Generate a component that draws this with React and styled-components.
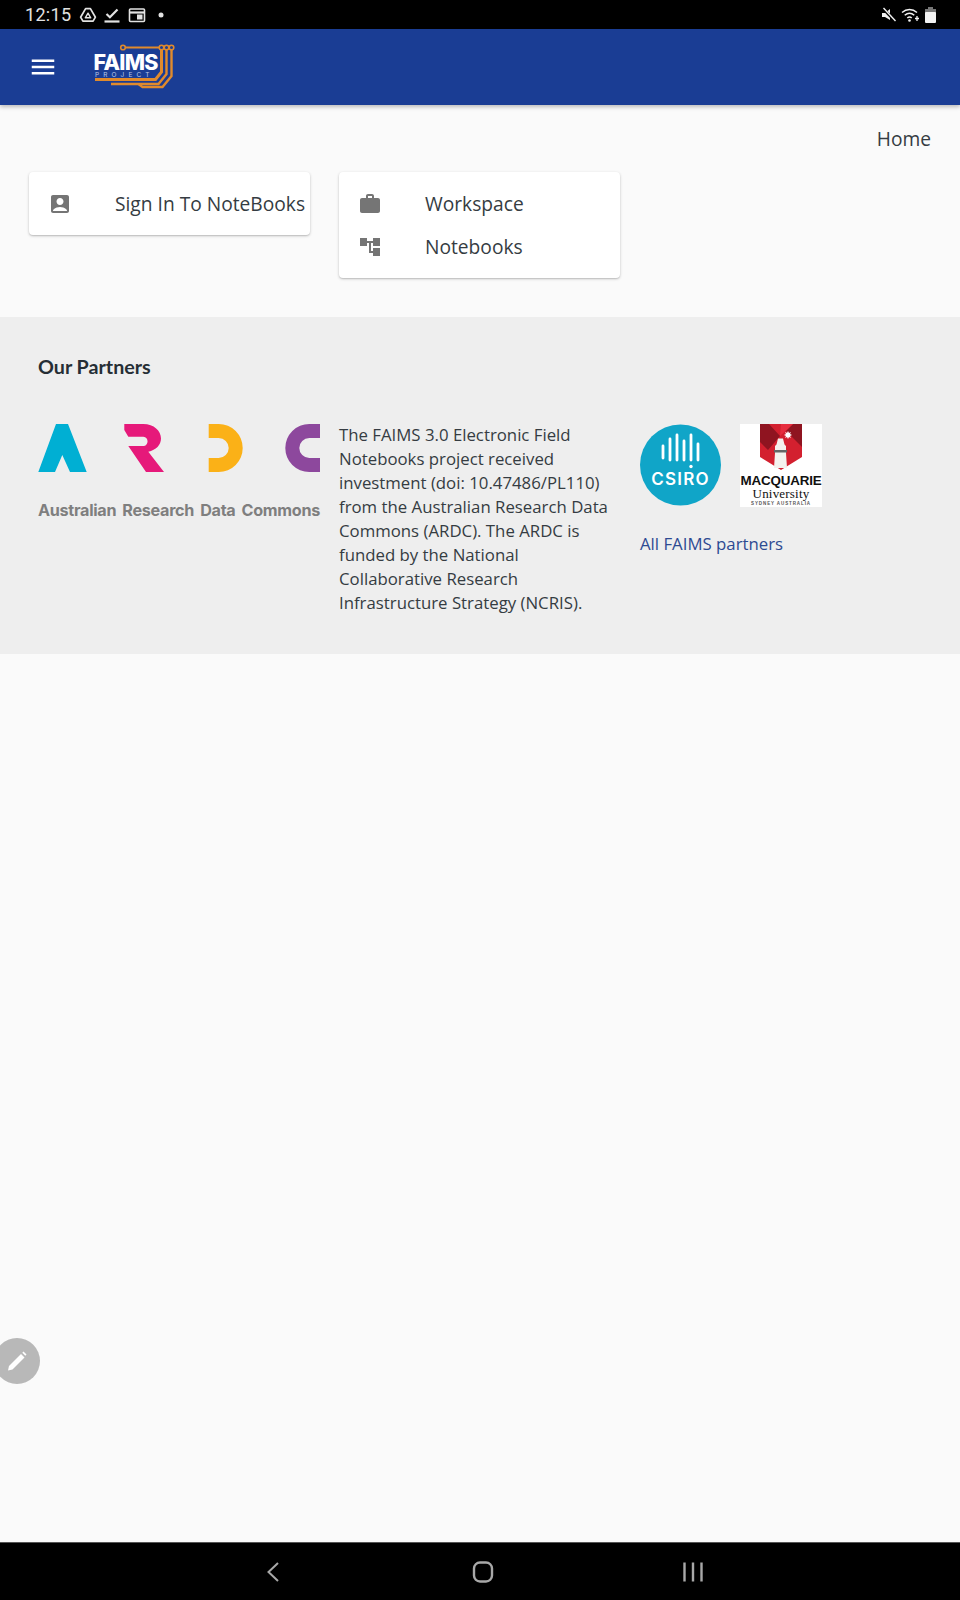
import React from 'react';
import styled, { createGlobalStyle } from 'styled-components';
import { MdMenu, MdAccountBox, MdWork, MdAccountTree } from 'react-icons/md';

const GlobalStyle = createGlobalStyle`
  html, body { margin: 0; padding: 0; background: #fafafa; }
  body { font-family: "Open Sans", sans-serif; color: #353c42; }
`;

const Page = styled.div`
  position: relative;
  display: flex;
  flex-direction: column;
  width: 960px;
  height: 1600px;
  overflow: hidden;
`;

const StatusBar = styled.div`
  display: flex;
  align-items: center;
  justify-content: space-between;
  height: 29px;
  padding: 0 24px 0 25px;
  background: #000;
  color: #e2e2e2;
`;

const StatusGroup = styled.div`
  display: flex;
  align-items: center;
  gap: ${({ $gap }) => $gap || 8}px;
`;

const Clock = styled.span`
  font: 400 18px/1 Roboto, sans-serif;
  letter-spacing: 0.3px;
  margin-right: 1px;
`;

const AppBar = styled.header`
  display: flex;
  align-items: center;
  height: 76px;
  padding-left: 28px;
  gap: 35px;
  background: #1a3d94;
  color: #fff;
  box-shadow: 0 2px 4px rgba(0, 0, 0, 0.25);
  position: relative;
  z-index: 1;
`;

const MenuIcon = styled(MdMenu)`
  width: 30px;
  height: 30px;
`;

const Crumbs = styled.div`
  padding: 20px 29px 0 0;
  text-align: right;
  font-size: 19.2px;
  line-height: 27px;
`;

const Cards = styled.div`
  display: flex;
  align-items: flex-start;
  gap: 29px;
  padding: 20px 29px 39px;
`;

const Card = styled.nav`
  display: flex;
  flex-direction: column;
  width: 281px;
  padding: 10px 0;
  box-sizing: border-box;
  background: #fff;
  border-radius: 4px;
  box-shadow: 0 1px 3px rgba(0, 0, 0, 0.22), 0 1px 1px rgba(0, 0, 0, 0.08);
`;

const Row = styled.div`
  display: flex;
  align-items: center;
  height: 43px;
  padding-left: 19px;
  gap: 43px;
  font-size: 19.2px;
  white-space: nowrap;
  svg { width: 24px; height: 24px; color: #757575; flex: none; }
`;

const Partners = styled.section`
  display: grid;
  grid-template-columns: 301px 301px 1fr;
  align-content: start;
  height: 337px;
  padding: 37px 0 0 38px;
  box-sizing: border-box;
  background: #eee;
`;

const Heading = styled.h2`
  grid-column: 1 / -1;
  margin: 0 0 45px;
  font: 700 19.7px/25px Lato, sans-serif;
  color: #262e35;
`;

const ArdcColumn = styled.div`
  width: 282px;
`;

const ArdcMark = styled.svg`
  display: block;
  width: 282px;
  height: 48px;
`;

const ArdcName = styled.div`
  display: flex;
  justify-content: space-between;
  margin-top: 26px;
  font: 700 16.2px/24px Inter, sans-serif;
  letter-spacing: -0.3px;
  color: #7f7f7f;
`;

const Blurb = styled.p`
  width: 275px;
  margin: -1px 0 0;
  font-size: 16.8px;
  line-height: 24px;
`;

const LogoRow = styled.div`
  display: flex;
  align-items: flex-start;
  gap: 19px;
`;

const CsiroLogo = styled.svg`
  display: block;
  width: 81px;
  height: 82px;
`;

const CsiroText = styled.text`
  font: 600 17px Inter, sans-serif;
  letter-spacing: 1.2px;
  fill: #fff;
`;

const MqBox = styled.div`
  display: flex;
  flex-direction: column;
  align-items: center;
  width: 82px;
  height: 83px;
  background: #fff;
  color: #111;
  overflow: hidden;
`;

const MqShield = styled.svg`
  display: block;
  width: 42px;
  height: 49px;
  flex: none;
  margin-bottom: 1px;
`;

const MqName = styled.span`
  font: 700 13.4px/14px "Liberation Sans", sans-serif;
  letter-spacing: -0.2px;
  white-space: nowrap;
`;

const MqUni = styled.span`
  font: 400 13px/12px "Liberation Serif", serif;
  letter-spacing: 0.2px;
`;

const MqPlace = styled.span`
  font: 700 4.5px/8px "Liberation Sans", sans-serif;
  letter-spacing: 0.9px;
  white-space: nowrap;
  color: #555;
`;

const PartnerLink = styled.a`
  display: block;
  margin-top: 25px;
  font-size: 16.8px;
  line-height: 24px;
  color: #2d4a92;
  text-decoration: none;
`;

const Filler = styled.div`
  flex: 1;
`;

const EditButton = styled.button`
  position: absolute;
  left: -6px;
  top: 1338px;
  display: flex;
  align-items: center;
  justify-content: center;
  width: 46px;
  height: 46px;
  padding: 0;
  border: 0;
  border-radius: 50%;
  background: #b8b8b8;
  color: #fff;
`;

const NavBar = styled.footer`
  display: flex;
  align-items: center;
  justify-content: center;
  gap: 186px;
  height: 58px;
  padding-left: 5px;
  background: #000;
  border-top: 1px solid #555;
  box-sizing: border-box;
  color: #a8a8a8;
`;

function DriveBadge() {
  return (
    <svg width="18" height="18" viewBox="0 0 18 18" fill="none" stroke="currentColor" strokeWidth="1.7" strokeLinejoin="round">
      <path d="M6.6 2.6h4.8l5 8.6-2.3 4H3.9l-2.3-4z" />
      <path d="M9 7.2l2.7 4.6H6.3z" strokeWidth="1.4" />
    </svg>
  );
}

function CheckBar() {
  return (
    <svg width="18" height="18" viewBox="0 0 18 18" fill="none" stroke="currentColor" strokeWidth="2.2">
      <path d="M3.5 8l3.4 3.2L14.5 3.500" />
      <path d="M1.500 15.500h15" />
    </svg>
  );
}

function CalendarBadge() {
  return (
    <svg width="18" height="18" viewBox="0 0 18 18" fill="none" stroke="currentColor" strokeWidth="1.6">
      <rect x="1.5" y="3" width="15" height="12.5" rx="1" />
      <path d="M1.5 6.5h15" strokeWidth="2.2" />
      <rect x="9" y="8.5" width="5.5" height="5" fill="currentColor" stroke="none" />
    </svg>
  );
}

function MuteIcon() {
  return (
    <svg width="16" height="16" viewBox="0 0 16 16">
      <path d="M1 6h3l5-4v11L4 10H1z" fill="#f2f2f2" />
      <path d="M2 1.5L14.5 14.5" stroke="#000" strokeWidth="3" />
      <path d="M2.5 1l12 13" stroke="#f2f2f2" strokeWidth="1.4" />
    </svg>
  );
}

function WifiIcon() {
  return (
    <svg width="20" height="16" viewBox="0 0 20 16" fill="none" stroke="#f2f2f2" strokeWidth="1.5">
      <path d="M1 5.5c4.5-4 10.5-4 15 0" />
      <path d="M3.7 8.3c3-2.6 6.6-2.6 9.6 0" />
      <path d="M6.3 11c1.5-1.3 3-1.3 4.4 0" />
      <circle cx="8.5" cy="13.5" r="1.3" fill="#f2f2f2" stroke="none" />
      <path d="M16 9v5M14 11.500h4" strokeWidth="1.300" />
    </svg>
  );
}

function BatteryIcon() {
  return (
    <svg width="11" height="16" viewBox="0 0 11 16">
      <rect x="3" y="0" width="5" height="3" fill="#777" />
      <rect x="0" y="2" width="11" height="4" fill="#777" />
      <rect x="0" y="5" width="11" height="11" rx="1" fill="#f2f2f2" />
    </svg>
  );
}

function PencilIcon() {
  return (
    <svg width="24" height="24" viewBox="0 0 24 24">
      <path d="M3 21.500l1-4.500L16 5l3.500 3.500-12 12z" fill="#fff" />
      <path d="M17.300 3.700l1.200-1.200 3 3-1.200 1.200z" fill="#fff" />
    </svg>
  );
}

function FaimsLogo() {
  return (
    <svg width="82" height="48" viewBox="92 43 82 48" fill="none" style={{ display: 'block' }}>
      <g stroke="#e08a2c" strokeWidth="2.400">
        <path d="M123 47.500h49" strokeWidth="2" />
        <path d="M160.500 48v24l-6 7.500H94" strokeWidth="3" />
        <path d="M165.500 48v26l-8 10H110" />
        <path d="M170.500 48v28l-9 11h-20l-4-3" />
      </g>
      <g fill="#1a3d94" stroke="#e08a2c" strokeWidth="1.600">
        <circle cx="122" cy="47.500" r="2.300" />
        <circle cx="160.500" cy="47.500" r="2.300" />
        <circle cx="165.500" cy="47.500" r="2.300" />
        <circle cx="170.500" cy="47.500" r="2.300" />
      </g>
      <text x="92.500" y="70" fontFamily="Inter, sans-serif" fontWeight="800" fontSize="21.500" letterSpacing="-0.700" fill="#fff">FAIMS</text>
      <text x="94" y="77" fontFamily="Inter, sans-serif" fontSize="6.500" letterSpacing="4.100" fill="#b9c7e6">PROJECT</text>
    </svg>
  );
}

function ArdcLogo() {
  return (
    <ArdcMark viewBox="38 424 282 48">
      <path fill="#00afd3" d="M38.300 472L56 424h12l18.700 48H70l-7.700-17-7.300 17z" />
      <path fill="#e6197a" d="M124.300 424H143.300C154 424 161 431 161 438.500C161 445 156 450 148.300 451.700L164 472H146L128.300 446H143.300C149 446 149 436.700 143.300 436.700H128.300L124.300 430Z" />
      <path fill="#fbb117" d="M208.700 424h10a24 24 0 0 1 0 48h-10v-14h10a10 10 0 0 0 0-20h-10z" />
      <path fill="#8d489d" d="M320 424h-10.700a24 24 0 0 0 0 48H320v-14h-10.700a10 10 0 0 1 0-20H320z" />
    </ArdcMark>
  );
}

function CsiroMark() {
  return (
    <CsiroLogo viewBox="0 0 81 82">
      <circle cx="40.500" cy="41" r="40.500" fill="#10a5c8" />
      <g stroke="#fff" strokeWidth="2.800" strokeLinecap="round">
        <path d="M23 22v12" />
        <path d="M30 15v21" />
        <path d="M37 11v25" />
        <path d="M44 17v19" />
        <path d="M51 11v25" />
        <path d="M58 20v16" />
      </g>
      <circle cx="51" cy="42.500" r="1.700" fill="#fff" />
      <CsiroText x="40.500" y="61" textAnchor="middle">CSIRO</CsiroText>
    </CsiroLogo>
  );
}

function MqCrest() {
  return (
    <MqShield viewBox="0 0 42 49">
      <path fill="#d3202f" d="M0 0h42v33L21 46 0 33z" />
      <path fill="#8f1420" d="M0 0h9l11 12L8 26 0 18zM42 0H33L26 7l16 16z" />
      <path fill="#ee3344" d="M20 12L33 0H21z" opacity="0.700" />
      <path fill="#f4f2ee" d="M18 14.500h5l1.500 6 1.500 1.500v7l1 15H14l1-15v-7l1.500-1.500z" />
      <rect x="14" y="26" width="13" height="2.500" fill="#666" />
      <path fill="#fff" d="M28 7l1 2 2-1-1 2 2 1-2 1 1 2-2-1-1 2-1-2-2 1 1-2-2-1 2-1-1-2 2 1z" />
    </MqShield>
  );
}

export default function App() {
  return (
    <Page>
      <GlobalStyle />
      <StatusBar>
        <StatusGroup $gap={6.5}>
          <Clock>12:15</Clock>
          <DriveBadge />
          <CheckBar />
          <CalendarBadge />
          <svg width="18" height="18" viewBox="0 0 18 18"><circle cx="9" cy="9" r="2.500" fill="currentColor" /></svg>
        </StatusGroup>
        <StatusGroup $gap={4}>
          <MuteIcon />
          <WifiIcon />
          <BatteryIcon />
        </StatusGroup>
      </StatusBar>
      <AppBar>
        <MenuIcon />
        <FaimsLogo />
      </AppBar>
      <Crumbs>Home</Crumbs>
      <Cards>
        <Card>
          <Row><MdAccountBox />Sign In To NoteBooks</Row>
        </Card>
        <Card>
          <Row><MdWork />Workspace</Row>
          <Row><MdAccountTree />Notebooks</Row>
        </Card>
      </Cards>
      <Partners>
        <Heading>Our Partners</Heading>
        <ArdcColumn>
          <ArdcLogo />
          <ArdcName>
            <span>Australian</span>
            <span>Research</span>
            <span>Data</span>
            <span>Commons</span>
          </ArdcName>
        </ArdcColumn>
        <Blurb>
          The FAIMS 3.0 Electronic Field Notebooks project received investment (doi: 10.47486/PL110) from the Australian Research Data Commons (ARDC). The ARDC is funded by the National Collaborative Research Infrastructure Strategy (NCRIS).
        </Blurb>
        <div>
          <LogoRow>
            <CsiroMark />
            <MqBox>
              <MqCrest />
              <MqName>MACQUARIE</MqName>
              <MqUni>University</MqUni>
              <MqPlace>SYDNEY AUSTRALIA</MqPlace>
            </MqBox>
          </LogoRow>
          <PartnerLink href="#partners">All FAIMS partners</PartnerLink>
        </div>
      </Partners>
      <Filler />
      <EditButton aria-label="Edit"><PencilIcon /></EditButton>
      <NavBar>
        <svg width="24" height="24" viewBox="0 0 24 24" fill="none" stroke="currentColor" strokeWidth="2"><path d="M17 3L7.500 12 17 21" /></svg>
        <svg width="24" height="24" viewBox="0 0 24 24" fill="none" stroke="currentColor" strokeWidth="2.400"><rect x="3" y="2.500" width="18" height="19" rx="6" /></svg>
        <svg width="24" height="24" viewBox="0 0 24 24" fill="none" stroke="currentColor" strokeWidth="2.400"><path d="M3.500 2.500v19M12 2.500v19M20.500 2.500v19" /></svg>
      </NavBar>
    </Page>
  );
}
